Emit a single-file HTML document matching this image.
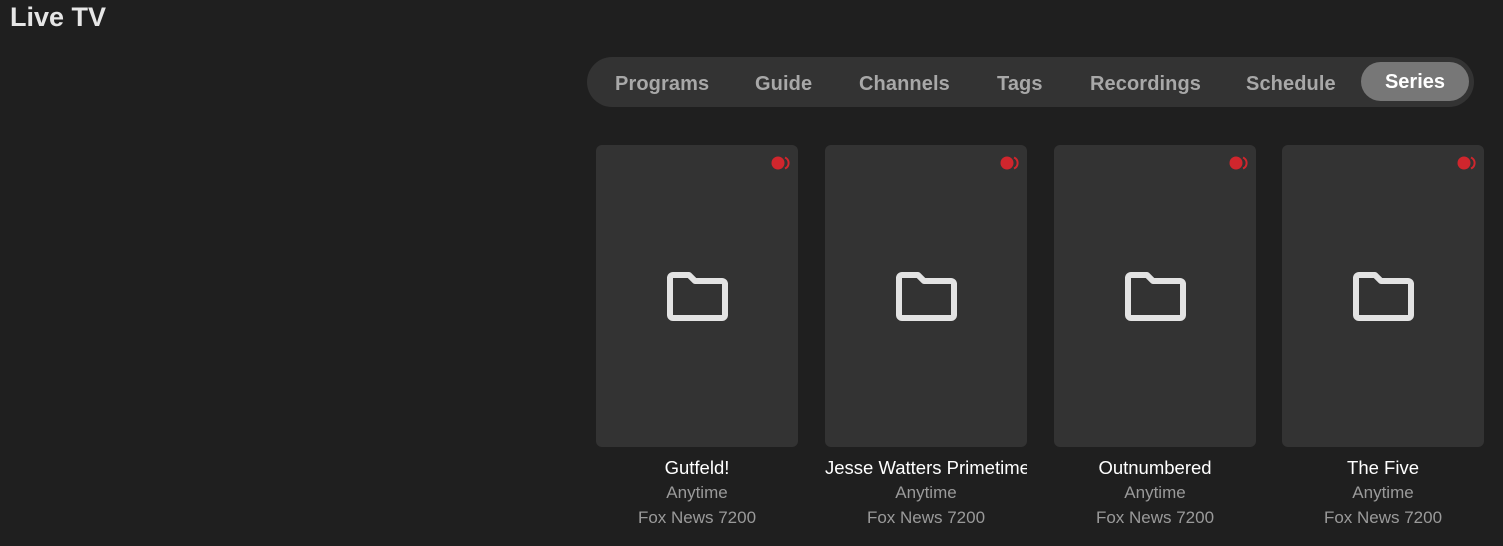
<!DOCTYPE html>
<html><head><style>
*{margin:0;padding:0;box-sizing:border-box}
body{width:1503px;height:546px;background:#1f1f1f;font-family:"Liberation Sans",sans-serif;overflow:hidden;position:relative}
h1{position:absolute;left:10px;top:2px;font-size:27px;font-weight:bold;color:#e6e6e6}
.bar{position:absolute;left:587px;top:57px;width:887px;height:50px;background:#333;border-radius:25px}
.tab{position:absolute;top:2px;height:50px;line-height:50px;font-size:20px;font-weight:bold;color:#a8a8a8;white-space:nowrap;letter-spacing:0.1px}
.pill{position:absolute;left:774px;top:5px;width:108px;height:39px;border-radius:20px;background:#777;color:#fff;text-align:center;line-height:41px;font-size:20px;font-weight:bold}
.card{position:absolute;top:145px;width:202px;height:302px;background:#333;border-radius:6px}
.card svg.f{position:absolute;left:71px;top:127px}
.card svg.r{position:absolute;right:5px;top:11px}
.t{position:absolute;width:240px;text-align:center;white-space:nowrap;overflow:hidden}
.n{top:457px;font-size:18.5px;color:#fff}
.a{top:483px;font-size:17px;color:#9a9a9a}
.c{top:508px;font-size:17px;color:#9a9a9a}
</style></head><body>
<h1>Live TV</h1>
<div class="bar">
<span class="tab" style="left:28px">Programs</span>
<span class="tab" style="left:168px">Guide</span>
<span class="tab" style="left:272px">Channels</span>
<span class="tab" style="left:410px">Tags</span>
<span class="tab" style="left:503px">Recordings</span>
<span class="tab" style="left:659px">Schedule</span>
<div class="pill">Series</div>
</div>
<div class="card" style="left:596px"><svg class="r" width="22" height="14"><circle cx="7" cy="7" r="6.5" fill="#d0262d"/><path d="M14 1.5a6 6 0 0 1 0 11" stroke="#d0262d" stroke-width="2" fill="none"/></svg><svg class="f" width="62" height="50"><path d="M3 6a3 3 0 0 1 3-3h16l6 6h27a3 3 0 0 1 3 3v31a3 3 0 0 1-3 3H6a3 3 0 0 1-3-3z" stroke="#e3e3e3" stroke-width="6" fill="none" stroke-linejoin="round"/></svg></div>
<div class="card" style="left:825px"><svg class="r" width="22" height="14"><circle cx="7" cy="7" r="6.5" fill="#d0262d"/><path d="M14 1.5a6 6 0 0 1 0 11" stroke="#d0262d" stroke-width="2" fill="none"/></svg><svg class="f" width="62" height="50"><path d="M3 6a3 3 0 0 1 3-3h16l6 6h27a3 3 0 0 1 3 3v31a3 3 0 0 1-3 3H6a3 3 0 0 1-3-3z" stroke="#e3e3e3" stroke-width="6" fill="none" stroke-linejoin="round"/></svg></div>
<div class="card" style="left:1054px"><svg class="r" width="22" height="14"><circle cx="7" cy="7" r="6.5" fill="#d0262d"/><path d="M14 1.5a6 6 0 0 1 0 11" stroke="#d0262d" stroke-width="2" fill="none"/></svg><svg class="f" width="62" height="50"><path d="M3 6a3 3 0 0 1 3-3h16l6 6h27a3 3 0 0 1 3 3v31a3 3 0 0 1-3 3H6a3 3 0 0 1-3-3z" stroke="#e3e3e3" stroke-width="6" fill="none" stroke-linejoin="round"/></svg></div>
<div class="card" style="left:1282px"><svg class="r" width="22" height="14"><circle cx="7" cy="7" r="6.5" fill="#d0262d"/><path d="M14 1.5a6 6 0 0 1 0 11" stroke="#d0262d" stroke-width="2" fill="none"/></svg><svg class="f" width="62" height="50"><path d="M3 6a3 3 0 0 1 3-3h16l6 6h27a3 3 0 0 1 3 3v31a3 3 0 0 1-3 3H6a3 3 0 0 1-3-3z" stroke="#e3e3e3" stroke-width="6" fill="none" stroke-linejoin="round"/></svg></div>

<div class="t n" style="left:577px">Gutfeld!</div>
<div class="t a" style="left:577px">Anytime</div>
<div class="t c" style="left:577px">Fox News 7200</div>
<div class="t n" style="left:825px;width:202px;text-align:left">Jesse Watters Primetime</div>
<div class="t a" style="left:806px">Anytime</div>
<div class="t c" style="left:806px">Fox News 7200</div>
<div class="t n" style="left:1035px">Outnumbered</div>
<div class="t a" style="left:1035px">Anytime</div>
<div class="t c" style="left:1035px">Fox News 7200</div>
<div class="t n" style="left:1263px">The Five</div>
<div class="t a" style="left:1263px">Anytime</div>
<div class="t c" style="left:1263px">Fox News 7200</div>
</body></html>
